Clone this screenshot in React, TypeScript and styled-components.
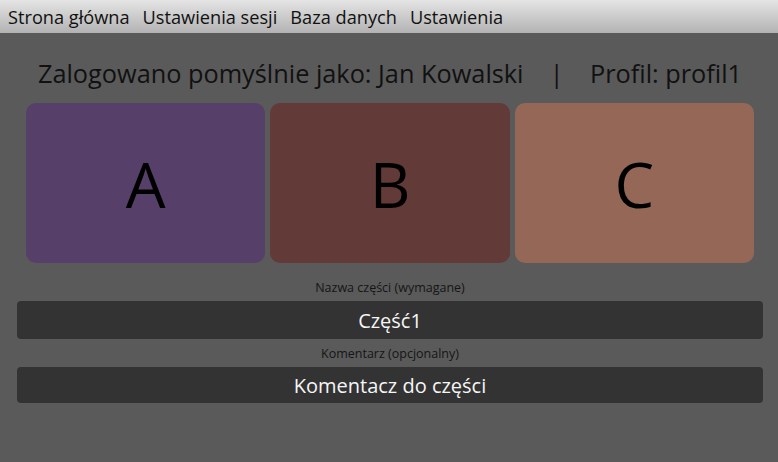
import styled, { createGlobalStyle } from 'styled-components';

const GlobalStyle = createGlobalStyle`
  html, body {
    margin: 0;
    padding: 0;
    background: #5a5a5a;
    font-family: "Open Sans", "Noto Sans", sans-serif;
  }
`;

const Page = styled.div`
  width: 778px;
  height: 462px;
  background: #5a5a5a;
  display: flex;
  flex-direction: column;
`;

const MenuBar = styled.nav`
  height: 33px;
  display: flex;
  align-items: center;
  gap: 13px;
  padding: 0 8px;
  background: linear-gradient(#e4e4e4, #b3b3b3);
  box-sizing: border-box;
`;

const MenuItem = styled.span`
  font-size: 18.2px;
  color: #111;
  cursor: pointer;
`;

const Content = styled.main`
  display: flex;
  flex-direction: column;
  padding: 0 15px 0 17px;
`;

const Greeting = styled.h1`
  margin: 20px 0 0;
  height: 50px;
  line-height: 40px;
  font-size: 25.3px;
  font-weight: 400;
  color: #111;
  text-align: center;
  white-space: pre;
`;

const Tiles = styled.div`
  display: grid;
  grid-template-columns: repeat(3, 1fr);
  gap: 5px;
  margin: 0 9px;
`;

const Tile = styled.div<{ $bg: string }>`
  height: 160px;
  border-radius: 10px;
  background: ${(p) => p.$bg};
  display: flex;
  align-items: center;
  justify-content: center;
  font-size: 63px;
  color: #000;
`;

const FieldLabel = styled.label`
  display: block;
  text-align: center;
  font-size: 12.5px;
  color: #151515;
  height: 14px;
  line-height: 14px;
  margin: ${(p) => (p.htmlFor === 'name' ? '18px' : '8px')} 0 6px;
`;

const Field = styled.input<{ $h: number }>`
  height: ${(p) => p.$h}px;
  border: none;
  border-radius: 4px;
  background: #333333;
  color: #f6f6f6;
  text-align: center;
  font-family: inherit;
  font-size: 20px;
  padding: 0;
  outline: none;
`;

export default function App() {
  return (
    <Page>
      <GlobalStyle />
      <MenuBar>
        <MenuItem>Strona główna</MenuItem>
        <MenuItem>Ustawienia sesji</MenuItem>
        <MenuItem>Baza danych</MenuItem>
        <MenuItem>Ustawienia</MenuItem>
      </MenuBar>
      <Content>
        <Greeting>{'Zalogowano pomyślnie jako: Jan Kowalski    |    Profil: profil1'}</Greeting>
        <Tiles>
          <Tile $bg="#563f69">A</Tile>
          <Tile $bg="#623a37">B</Tile>
          <Tile $bg="#946757">C</Tile>
        </Tiles>
        <FieldLabel htmlFor="name">Nazwa części (wymagane)</FieldLabel>
        <Field id="name" $h={38} defaultValue="Część1" />
        <FieldLabel htmlFor="comment">Komentarz (opcjonalny)</FieldLabel>
        <Field id="comment" $h={36} defaultValue="Komentacz do części" />
      </Content>
    </Page>
  );
}
